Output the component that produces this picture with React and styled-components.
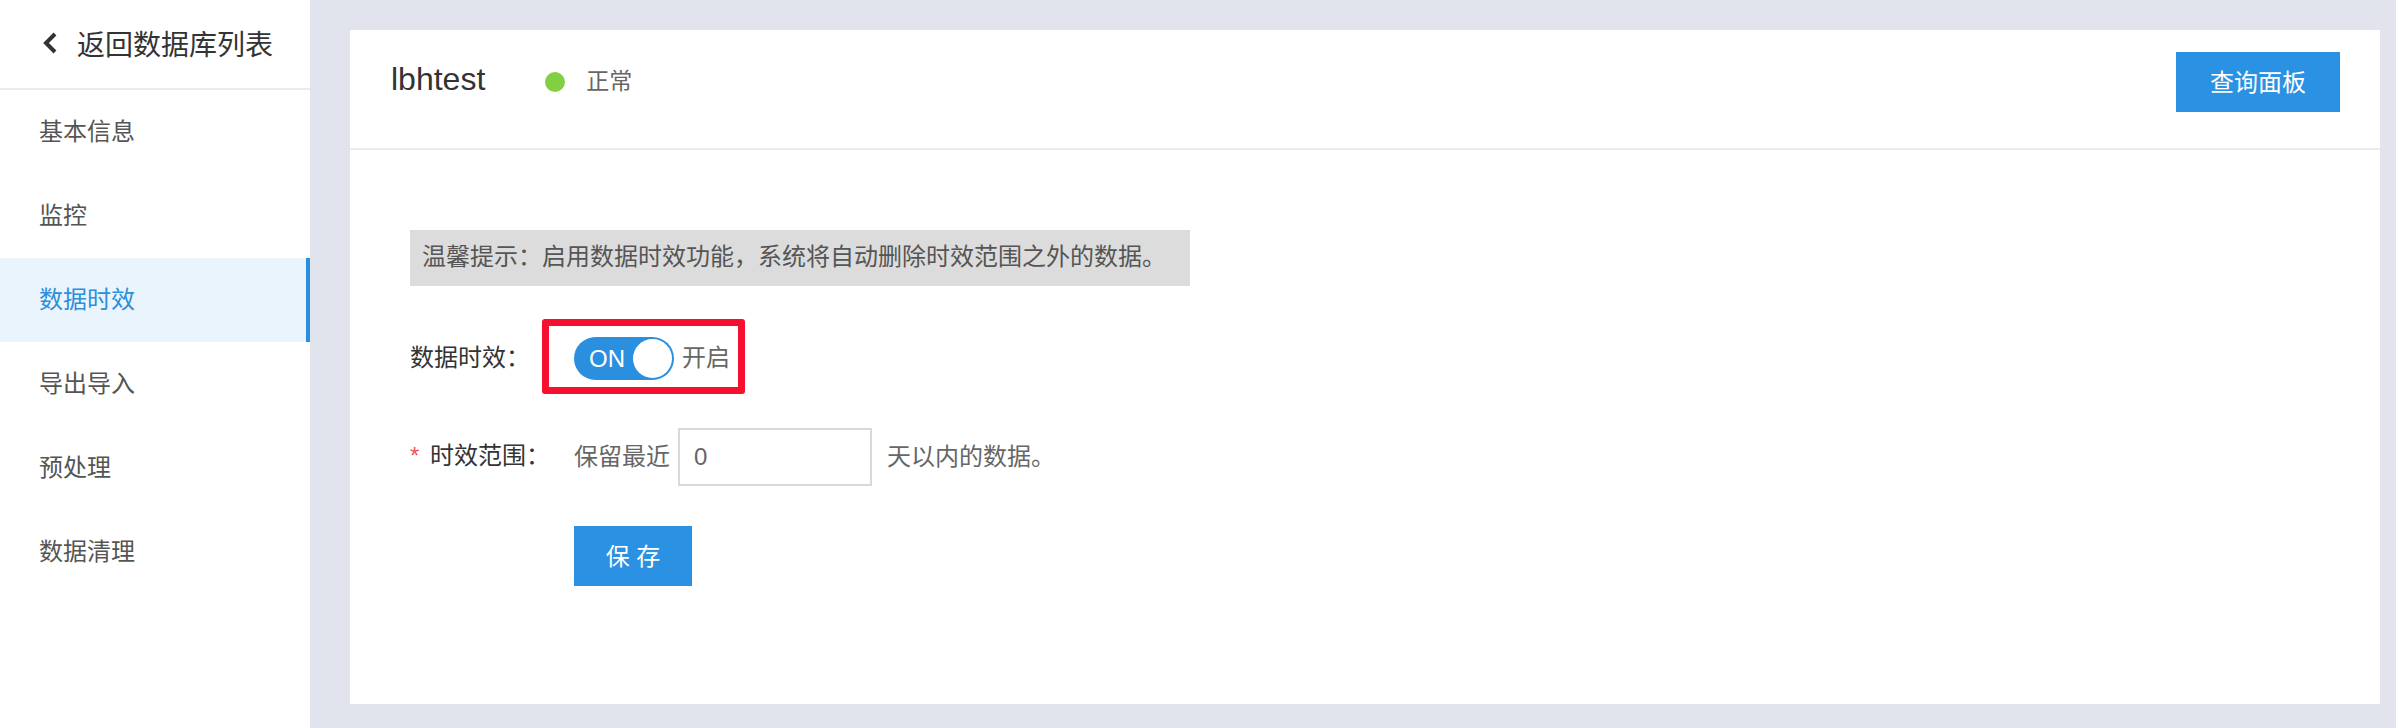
import React, { useState } from "react";
import styled, { createGlobalStyle } from "styled-components";

const GlobalStyle = createGlobalStyle`
  html, body {
    margin: 0;
    padding: 0;
    height: 100%;
  }
  body {
    font-family: "Liberation Sans", "Noto Sans CJK SC", sans-serif;
  }
  #root {
    height: 100%;
  }
  * {
    box-sizing: border-box;
  }
`;

const Layout = styled.div`
  display: flex;
  height: 100vh;
  background: #e1e4ed;
`;

const Sidebar = styled.aside`
  width: 310px;
  flex-shrink: 0;
  background: #fff;
`;

const BackLink = styled.div`
  display: flex;
  align-items: center;
  gap: 18px;
  height: 90px;
  padding: 0 0 3px 41px;
  border-bottom: 2px solid #ebebeb;
  font-size: 28px;
  color: #333;
  cursor: pointer;
`;

const MenuItem = styled.div`
  display: flex;
  align-items: center;
  height: 84px;
  padding: 0 0 6px 39px;
  font-size: 24px;
  color: ${(p) => (p.$active ? "#2b8fe0" : "#555")};
  background: ${(p) => (p.$active ? "#eaf4fc" : "transparent")};
  border-right: 4px solid ${(p) => (p.$active ? "#2b8fe0" : "transparent")};
  cursor: pointer;
`;

const Main = styled.main`
  flex: 1;
  display: flex;
  padding: 30px 16px 24px 40px;
`;

const Card = styled.section`
  flex: 1;
  display: flex;
  flex-direction: column;
  background: #fff;
`;

const CardHeader = styled.header`
  display: flex;
  align-items: center;
  height: 120px;
  padding: 0 40px 14px 41px;
  border-bottom: 2px solid #ebebeb;
`;

const Title = styled.h1`
  margin: 0 0 6px;
  font-size: 32px;
  font-weight: normal;
  color: #333;
`;

const StatusDot = styled.span`
  width: 20px;
  height: 20px;
  margin-left: 60px;
  border-radius: 50%;
  background: #82d042;
`;

const StatusText = styled.span`
  margin: 0 0 6px 21px;
  font-size: 23px;
  color: #666;
`;

const PrimaryButton = styled.button`
  width: ${(p) => p.$width}px;
  height: 60px;
  margin-left: ${(p) => p.$offset || 0};
  padding: 0 0 4px;
  border: none;
  background: #2b91e2;
  color: #fff;
  font-family: inherit;
  font-size: 24px;
  cursor: pointer;

  &:hover {
    background: #1f82d1;
  }
`;

const CardBody = styled.div`
  display: flex;
  flex-direction: column;
  align-items: flex-start;
  padding: 80px 60px;
`;

const Tip = styled.div`
  width: 780px;
  height: 56px;
  padding-left: 12px;
  line-height: 54px;
  background: #dcdcdc;
  color: #555;
  font-size: 24px;
`;

const FormRow = styled.div`
  display: flex;
  align-items: center;
  margin-top: ${(p) => p.$gap}px;
`;

const Label = styled.label`
  display: flex;
  align-items: center;
  width: 164px;
  flex-shrink: 0;
  padding-bottom: 7px;
  font-size: 24px;
  color: #333;
`;

const Required = styled.span`
  width: 20px;
  padding-top: 4px;
  color: #f0565b;
  font-size: 24px;
`;

const Annotated = styled.div`
  position: relative;
  display: flex;
  align-items: center;
  gap: 8px;

  &::after {
    content: "";
    position: absolute;
    top: -18px;
    left: -32px;
    right: -15px;
    bottom: -14px;
    border: 7px solid #f5102f;
    border-radius: 3px;
    pointer-events: none;
  }
`;

const Switch = styled.button`
  position: relative;
  display: flex;
  align-items: center;
  width: 100px;
  height: 43px;
  padding: 0 0 0 15px;
  border: none;
  border-radius: 22px;
  background: ${(p) => (p.$on ? "#2b8fe0" : "#c5c5c5")};
  color: #fff;
  font-family: inherit;
  font-size: 24px;
  cursor: pointer;
`;

const Knob = styled.span`
  position: absolute;
  top: 2px;
  right: ${(p) => (p.$on ? "2px" : "59px")};
  width: 39px;
  height: 39px;
  border-radius: 50%;
  background: #fff;
`;

const Hint = styled.span`
  padding-bottom: 6px;
  font-size: 24px;
  color: #666;
`;

const DaysInput = styled.input`
  width: 194px;
  height: 58px;
  margin: 0 15px 0 8px;
  padding-left: 14px;
  border: 2px solid #d9d9d9;
  outline: none;
  font-family: inherit;
  font-size: 24px;
  color: #666;

  &:focus {
    border-color: #2b8fe0;
  }
`;

const menu = ["基本信息", "监控", "数据时效", "导出导入", "预处理", "数据清理"];

function ChevronLeft() {
  return (
    <svg width="18" height="24" viewBox="0 0 18 24">
      <polyline
        points="14,3 5,12 14,21"
        fill="none"
        stroke="#333"
        strokeWidth="4"
      />
    </svg>
  );
}

export default function App() {
  const [enabled, setEnabled] = useState(true);
  const [days, setDays] = useState("0");

  return (
    <Layout>
      <GlobalStyle />
      <Sidebar>
        <BackLink>
          <ChevronLeft />
          返回数据库列表
        </BackLink>
        {menu.map((item) => (
          <MenuItem key={item} $active={item === "数据时效"}>
            {item}
          </MenuItem>
        ))}
      </Sidebar>

      <Main>
        <Card>
          <CardHeader>
            <Title>lbhtest</Title>
            <StatusDot />
            <StatusText>正常</StatusText>
            <PrimaryButton $width={164} $offset="auto">
              查询面板
            </PrimaryButton>
          </CardHeader>

          <CardBody>
            <Tip>温馨提示：启用数据时效功能，系统将自动删除时效范围之外的数据。</Tip>

            <FormRow $gap={51}>
              <Label>数据时效：</Label>
              <Annotated>
                <Switch $on={enabled} onClick={() => setEnabled(!enabled)}>
                  {enabled ? "ON" : ""}
                  <Knob $on={enabled} />
                </Switch>
                <Hint>{enabled ? "开启" : "关闭"}</Hint>
              </Annotated>
            </FormRow>

            <FormRow $gap={48}>
              <Label>
                <Required>*</Required>
                时效范围：
              </Label>
              <Hint>保留最近</Hint>
              <DaysInput value={days} onChange={(e) => setDays(e.target.value)} />
              <Hint>天以内的数据。</Hint>
            </FormRow>

            <FormRow $gap={40}>
              <PrimaryButton $width={118} $offset="164px">
                保 存
              </PrimaryButton>
            </FormRow>
          </CardBody>
        </Card>
      </Main>
    </Layout>
  );
}
